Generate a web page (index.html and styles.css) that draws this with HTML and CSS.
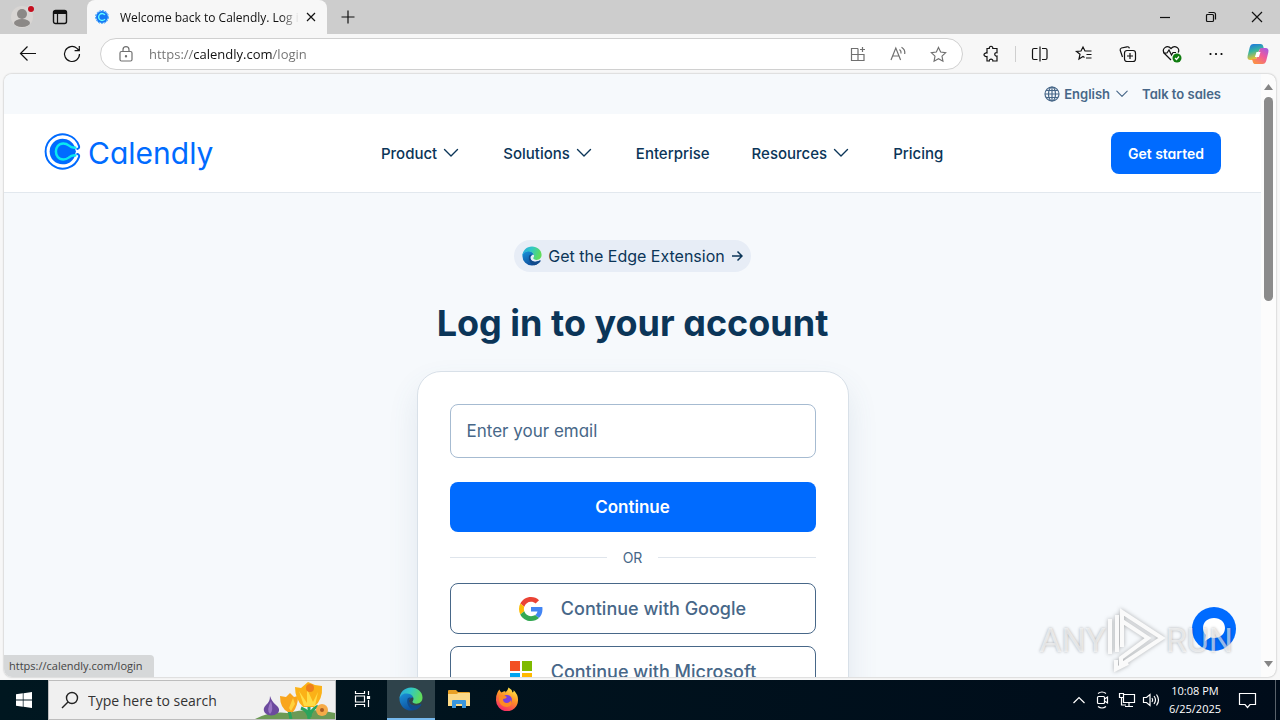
FILE: index.html
```html
<!DOCTYPE html>
<html lang="en">
<head>
  <meta charset="utf-8">
  <title>Welcome back to Calendly. Log in</title>
  <meta name="viewport" content="width=device-width, initial-scale=1">
  <link rel="stylesheet" href="styles.css">
</head>
<body>
  <!-- shared icons -->
  <svg class="defs" width="0" height="0" aria-hidden="true">
    <defs>
      <linearGradient id="edge-top" x1="0" y1="0" x2="1" y2="0.3">
        <stop offset="0" stop-color="#2aa5e0" />
        <stop offset="0.5" stop-color="#31c8c4" />
        <stop offset="1" stop-color="#5fdc5c" />
      </linearGradient>
      <linearGradient id="edge-low" x1="0" y1="0" x2="0.6" y2="1">
        <stop offset="0" stop-color="#1b94dc" />
        <stop offset="1" stop-color="#0c4a97" />
      </linearGradient>
      <linearGradient id="fox" x1="0.8" y1="0" x2="0.3" y2="1">
        <stop offset="0" stop-color="#fff04a" />
        <stop offset="0.45" stop-color="#ff9326" />
        <stop offset="1" stop-color="#f5246a" />
      </linearGradient>
      <linearGradient id="pilot-a" x1="0" y1="0" x2="0.3" y2="1">
        <stop offset="0" stop-color="#1a6fe8" />
        <stop offset="0.5" stop-color="#37b5a0" />
        <stop offset="1" stop-color="#f6c32c" />
      </linearGradient>
      <linearGradient id="pilot-b" x1="1" y1="0" x2="0.3" y2="1">
        <stop offset="0" stop-color="#9a5bea" />
        <stop offset="0.5" stop-color="#ef5a9b" />
        <stop offset="1" stop-color="#fb8f48" />
      </linearGradient>
      <symbol id="chevron" viewBox="0 0 20 20">
        <path d="M3.500 6.500l6.500 6.500 6.500-6.500" fill="none" stroke="currentColor" stroke-width="1.400" stroke-linecap="round" stroke-linejoin="round" />
      </symbol>
      <symbol id="edge" viewBox="0 0 24 24">
        <path d="M.5 12C.5 7 5 6 8 6c4 0 6 2.500 6.500 4.500-2-.5-4.500.8-4.500 3.500 0 4 6 6.500 11.500 3.500.7-.4 1 0 .6.700C19.500 21.500 15.500 23.500 12 23.500A11.500 11.500 0 0 1 .5 12z" fill="url(#edge-low)" />
        <path d="M8.500 12c-1.200 4.500 1.500 10 6.500 11.200 3-.8 5.500-2.500 7.100-5 .4-.7.100-1.100-.6-.7C16 20.500 10 18 10 14c0-1.700.8-2.800 2-3.300-1.500-.5-3 0-3.500 1.300z" fill="#114a8b" />
        <path d="M.5 12C.5 5.500 5.500.5 12 .5c6.500 0 11.500 4.500 11.500 10 0 4-2.700 6.200-6 6.200-2.500 0-4-.9-4-1.900 0-.7 1-1.300 1-3 0-2.500-2.500-5.300-6.500-5.300C4 6.500 1 8.500.5 12z" fill="url(#edge-top)" />
      </symbol>
      <symbol id="calendly" viewBox="0 0 36 36">
        <path d="M32.300 15.500c1.800-.3 2.200-1.500 1.700-3A16.700 16.700 0 1 0 34 23.500c.5-1.500.1-2.700-1.700-3" fill="none" stroke="#006bff" stroke-width="1.900" stroke-linecap="round" />
        <path d="M18 5.500c5.500 0 9.500 2.800 11.800 7.500L31 18l-1.200 5c-2.300 4.700-6.300 7.500-11.800 7.500a12.500 12.500 0 0 1 0-25z" fill="#006bff" />
        <path d="M31.500 14c-4 1-5.800-.5-7.500-2-1.600-1.300-3-1.800-5.200-1.800-9.600 0-9.600 15.600 0 15.600 2.200 0 3.600-.5 5.200-1.800 1.700-1.500 3.500-3 7.500-2" fill="none" stroke="#0ae8f0" stroke-width="2.400" />
      </symbol>
    </defs>
  </svg>

  <header class="tabstrip">
    <button class="strip-btn" aria-label="Profile">
      <svg width="24" height="24" viewBox="0 0 24 24"><circle cx="12" cy="12" r="11" fill="#d8d5d3" /><circle cx="12" cy="9" r="5" fill="#8b8886" /><ellipse cx="12" cy="18" rx="8" ry="4" fill="#8b8886" /><circle cx="21" cy="4" r="4" fill="#d8d8d8" /><circle cx="21" cy="4" r="3" fill="#c50f1f" /></svg>
    </button>
    <button class="strip-btn" aria-label="Tab actions">
      <svg class="line" width="16" height="16" viewBox="0 0 16 16"><rect x="1.500" y="1.500" width="13" height="13" rx="2" stroke-width="1.400" /><path d="M1.500 3.500h13" stroke-width="3" /><path d="M5.500 4v10.500" /></svg>
    </button>
    <div class="tab">
      <svg width="16" height="16" viewBox="0 0 16 16"><circle cx="8" cy="8" r="6" fill="#1478f5" /><circle cx="8" cy="8" r="6.500" fill="none" stroke="#45a7fb" stroke-dasharray="2 1" /><path d="M11 6a3.500 3.500 0 1 0 0 4" fill="none" stroke="#6ff" stroke-width="1.300" /></svg>
      <span class="tab-title">Welcome back to Calendly. Log in</span>
      <button class="tab-close" aria-label="Close tab"><svg class="line" width="10" height="10" viewBox="0 0 10 10"><path d="M1 1l8 8M9 1l-8 8" /></svg></button>
    </div>
    <button class="new-tab" aria-label="New tab"><svg class="line" width="14" height="14" viewBox="0 0 14 14"><path d="M7 .5v13M.5 7h13" /></svg></button>
    <div class="window-controls">
      <button aria-label="Minimize"><svg class="line" width="10" height="10" viewBox="0 0 10 10"><path d="M0 5.500h10" /></svg></button>
      <button aria-label="Restore"><svg class="line" width="10" height="10" viewBox="0 0 10 10"><rect x=".5" y="2.500" width="7" height="7" rx="1" /><path d="M2.500.5h5a2 2 0 0 1 2 2v5" /></svg></button>
      <button aria-label="Close"><svg class="line" width="10" height="10" viewBox="0 0 10 10"><path d="M0 0l10 10M10 0L0 10" /></svg></button>
    </div>
  </header>

  <div class="toolbar">
    <button aria-label="Back"><svg class="line" width="18" height="18" viewBox="0 0 18 18"><path d="M17 8.500H1.500M8.500 1.500l-7 7 7 7" /></svg></button>
    <button aria-label="Refresh"><svg class="line" width="18" height="18" viewBox="0 0 18 18"><path d="M16.500 9A7.500 7.500 0 1 1 14 3.400L16 5.500M16.300 1v4.700h-4.700" /></svg></button>
    <div class="address">
      <svg class="line" width="14" height="16" viewBox="0 0 14 16"><rect x="1" y="5.500" width="12" height="9.500" rx="1.500" /><path d="M4 5.500V3.700a3 3 0 0 1 6 0v1.800" /><circle cx="7" cy="10.300" r=".6" fill="currentColor" /></svg>
      <input class="url" type="text" aria-label="Address" value="https://calendly.com/login">
      <button aria-label="Apps"><svg class="line" width="16" height="16" viewBox="0 0 16 16"><path d="M8 2.500H1.500v12H14V8.500H1.500M8 2.500v12M12.500 1v5M10 3.500h5" /></svg></button>
      <button aria-label="Read aloud"><svg class="line" width="16" height="16" viewBox="0 0 16 16"><path d="M1 14L5.800 2l4.800 12M2.500 10h6.500M9.500 3.500q2 1.500 1.500 4M11.500 1.200q4 2.300 3.200 6.800" /></svg></button>
      <button aria-label="Favorite"><svg class="line" width="17" height="17" viewBox="0 0 18 18"><path d="M9 1.500l2.300 4.900 5.300.7-3.900 3.700 1 5.300L9 13.500l-4.700 2.600 1-5.300L1.400 7.100l5.300-.7z" /></svg></button>
    </div>
    <button aria-label="Extensions"><svg class="line" width="16" height="18" viewBox="0 0 16 18"><path d="M4 3.500h2.300c-.5-3 4-3 3.500 0H14v4.200c-3-.5-3 3.800 0 3.300V16H9.800c.5-2.500-4-2.500-3.500 0H4v-4.500c-4 .5-4-4 0-3.500z" /></svg></button>
    <span class="divider"></span>
    <button aria-label="Split screen"><svg class="line" width="16" height="16" viewBox="0 0 16 16"><path d="M5.500 2.500H2a1.500 1.500 0 0 0-1.500 1.500v8A1.500 1.500 0 0 0 2 13.500h3.500M10 2.500h3.500A1.500 1.500 0 0 1 15 4v8a1.500 1.500 0 0 1-1.500 1.500H10M8 .5v15" /></svg></button>
    <button aria-label="Favorites"><svg class="line" width="18" height="16" viewBox="0 0 18 16"><path d="M9.500 11.500l-1.500-1-4 2.500 1-4.800L1.500 5.500 6 5l2-4 2 4h6.500M11.500 8.500h5M11 12h5.500" /></svg></button>
    <button aria-label="Collections"><svg class="line" width="18" height="17" viewBox="0 0 18 17"><path d="M3.500 11L1.200 4.300A2 2 0 0 1 2.500 2L8 .8a2 2 0 0 1 2.400 1.600" /><rect x="5.500" y="4.500" width="11" height="11" rx="2.500" /><path d="M11 7v6M8 10h6" /></svg></button>
    <button aria-label="Browser essentials"><svg class="line" width="20" height="18" viewBox="0 0 20 18"><path d="M9 15L2.500 8.500C-1 4 5-1 9 3.500c4-4.500 10 .5 7 4M1 8h4l2-3 2.500 5L11 7.500h3" /><circle cx="15" cy="13" r="4.500" fill="#107c10" stroke="none" /><path d="M13 13l1.500 1.500 2.500-3" stroke="#fff" /></svg></button>
    <button aria-label="Menu"><svg width="14" height="4" viewBox="0 0 14 4"><circle cx="1.500" cy="2" r="1.100" /><circle cx="7" cy="2" r="1.100" /><circle cx="12.500" cy="2" r="1.100" /></svg></button>
    <button class="copilot" aria-label="Copilot"><svg width="22" height="22" viewBox="0 0 22 22"><path d="M6.500 1h7c1.500 0 2.300.9 2.700 2.300L17 6h-2.500c-1.500 0-2.300.6-2.800 2.300L9.500 15c-.4 1.400-1 2-2.500 2H3.500C1 17 0 15.500.7 12.500l2-8C3.300 2 4.500 1 6.500 1z" fill="url(#pilot-a)" /><path d="M15.500 21h-7c-1.500 0-2.300-.9-2.700-2.300L5 16h2.500c1.500 0 2.300-.6 2.800-2.300L12.500 7c.4-1.400 1-2 2.500-2h3.500c2.500 0 3.500 1.500 2.800 4.500l-2 8c-.6 2.500-1.800 3.500-3.800 3.500z" fill="url(#pilot-b)" /><path d="M9.500 9h4l-1.600 5h-4z" fill="#fff" /></svg></button>
  </div>

  <div class="viewport">
    <div class="site">
      <div class="utility">
        <button class="language">
          <svg class="line" width="16" height="16" viewBox="0 0 16 16"><circle cx="8" cy="8" r="7" /><ellipse cx="8" cy="8" rx="3.500" ry="7" /><path d="M8 1v14M1 8h14M2 4.500h12M2 11.500h12" /></svg>
          English
          <svg width="16" height="16"><use href="#chevron" /></svg>
        </button>
        <a href="#">Talk to sales</a>
      </div>

      <div class="site-header">
        <a class="logo" href="#" aria-label="Calendly">
          <svg width="37" height="37"><use href="#calendly" /></svg>
          <span>Calendly</span>
        </a>
        <nav class="nav">
          <button>Product <svg width="20" height="20"><use href="#chevron" /></svg></button>
          <button>Solutions <svg width="20" height="20"><use href="#chevron" /></svg></button>
          <a href="#">Enterprise</a>
          <button>Resources <svg width="20" height="20"><use href="#chevron" /></svg></button>
          <a href="#">Pricing</a>
        </nav>
        <button class="get-started">Get started</button>
      </div>

      <main class="login">
        <a class="extension" href="#">
          <svg width="20" height="20"><use href="#edge" /></svg>
          Get the Edge Extension
          <svg class="arrow" width="12" height="12" viewBox="0 0 12 12"><path d="M1 6h10M6.500 1.500L11 6l-4.500 4.500" /></svg>
        </a>
        <h1>Log in to your account</h1>
        <form class="card">
          <input class="email" type="email" placeholder="Enter your email" aria-label="Email">
          <button class="primary" type="button">Continue</button>
          <div class="or">OR</div>
          <button class="social" type="button">
            <svg width="24" height="24" viewBox="0 0 48 48"><path fill="#ea4335" d="M24 9.500c3.540 0 6.710 1.220 9.210 3.600l6.850-6.850C35.900 2.380 30.470 0 24 0 14.620 0 6.510 5.380 2.560 13.220l7.980 6.190C12.430 13.720 17.740 9.500 24 9.500z" /><path fill="#4285f4" d="M46.980 24.550c0-1.570-.15-3.090-.38-4.550H24v9.020h12.940c-.58 2.960-2.260 5.480-4.780 7.180l7.730 6c4.510-4.180 7.090-10.360 7.090-17.650z" /><path fill="#fbbc05" d="M10.530 28.590A14.500 14.500 0 0 1 9.770 24c0-1.600.27-3.140.76-4.590l-7.980-6.190A23.900 23.900 0 0 0 0 24c0 3.880.92 7.540 2.560 10.780z" /><path fill="#34a853" d="M24 48c6.480 0 11.930-2.130 15.890-5.810l-7.730-6C30.010 37.640 27.240 38.490 24 38.490c-6.260 0-11.570-4.220-13.470-9.910l-7.980 6.190C6.510 42.620 14.620 48 24 48z" /></svg>
            Continue with Google
          </button>
          <button class="social" type="button">
            <svg width="24" height="24" viewBox="0 0 24 24"><path fill="#f25022" d="M1 1h10v10H1z" /><path fill="#7fba00" d="M13 1h10v10H13z" /><path fill="#00a4ef" d="M1 13h10v10H1z" /><path fill="#ffb900" d="M13 13h10v10H13z" /></svg>
            Continue with Microsoft
          </button>
        </form>
      </main>
    </div>

    <div class="scrollbar">
      <svg width="9" height="6" viewBox="0 0 9 6"><path d="M0 6l4.500-6L9 6z" /></svg>
      <div class="thumb"></div>
      <svg class="down" width="9" height="6" viewBox="0 0 9 6"><path d="M0 0h9L4.500 6z" /></svg>
    </div>

    <button class="chat" aria-label="Chat">
      <svg width="26" height="26" viewBox="0 0 26 26"><path d="M13 2c6.500 0 11 4.300 11 10s-4.500 10-11 10c-1.300 0-2.500-.2-3.500-.5L4 25l1-6c-2-1.800-3-4.200-3-7C2 6.300 6.500 2 13 2z" fill="#fff" /></svg>
    </button>
    <div class="watermark">
      <span>ANY</span>
      <svg width="60" height="66" viewBox="0 0 60 66"><path d="M4 47V12M11 45V8M16 40V5l40 26-41 27v-7l27-20-26-17M10 53v9l12-6" /></svg>
      <span>RUN</span>
    </div>
    <div class="status">https://calendly.com/login</div>
  </div>

  <footer class="taskbar">
    <button class="start" aria-label="Start"><svg width="16" height="16" viewBox="0 0 16 16"><path fill="#fff" d="M0 2.300l6.800-1v6.300H0zM7.500 1.200L16 0v7.600H7.500zM0 8.400h6.800v6.300L0 13.700zM7.500 8.400H16V16l-8.500-1.200z" /></svg></button>
    <div class="search">
      <svg class="line" width="18" height="18" viewBox="0 0 18 18"><circle cx="11" cy="7" r="5.500" stroke-width="1.400" /><path d="M7 11l-6 6" stroke-width="1.400" /></svg>
      <input type="text" placeholder="Type here to search" aria-label="Search">
      <svg width="80" height="38" viewBox="0 0 80 38">
        <path d="M0 38q16-8 32-6 24-6 48 0v6z" fill="#6c9a55" />
        <path d="M33 25l3 13M54 22v16M46 27q8 3 8 11M63 25q-8 4-8 11" stroke="#2ba45c" stroke-width="3" fill="none" />
        <path d="M15 15q2 6 6 9 5 4 2 8-7 5-13 0-3-4 1-8 4-3 4-9z" fill="#6c4a9e" /><path d="M16 20q3 9-1 13-4-4 1-13z" fill="#9a76c4" />
        <path d="M25 15l6 1 4-4 4 4 4-1q0 10-5 16h-5q-8-4-8-16z" fill="#f9a51d" /><path d="M28 18l6 9 4-10 2 6-4 7z" fill="#ffd13b" />
        <path d="M40 6l6 1 7-6 7 3 7 1q1 14-8 21H48Q40 18 40 6z" fill="#fbb117" /><path d="M44 10l8 12V8l6 13 5-10-3 14H49z" fill="#ffdc45" /><circle cx="55" cy="7" r="4" fill="#ee7f1c" />
        <circle cx="67" cy="29" r="6" fill="#f6ab48" /><circle cx="67" cy="29" r="2" fill="#a95c22" />
      </svg>
    </div>
    <button class="task" aria-label="Task view"><svg class="line" width="18" height="18" viewBox="0 0 18 18"><path d="M2.500 1v2.500h9V1M2.500 17v-2.500h9V17M2.500 6h9v6h-9zM15.500 1v4M15.500 10v7" /><path d="M14.500 6.500h2v2h-2z" fill="#fff" /></svg></button>
    <button class="task active" aria-label="Edge"><svg width="24" height="24"><use href="#edge" /></svg></button>
    <button class="task" aria-label="File Explorer"><svg width="22" height="20" viewBox="0 0 22 20"><path d="M0 2q0-1 1-1h7l2 2h11q1 0 1 1v5H0z" fill="#e8a025" /><path d="M0 5h9l1-1h12v13H0z" fill="#fcd987" /><path d="M4 19v-7q0-1 1-1h12q1 0 1 1v7h-4v-4H8v4z" fill="#3a96dd" /></svg></button>
    <button class="task" aria-label="Firefox"><svg width="24" height="24" viewBox="0 0 24 24"><path d="M2.500 5.500Q3 4 4.500 2.500q.5 2 2 3 2-1.500 4-1.500-.5 1 0 1.500Q13 3 13.500.5q3 1.500 4 5Q19 5 18.500 3q5 5 4.500 10.500A11 11 0 0 1 1 13Q1 8 2.500 5.500z" fill="url(#fox)" /><circle cx="12" cy="13" r="5" fill="#7a3fe0" /><path d="M4 9q4-2 8 1-1 2-4 2 0 4 4 4 4-1 4-4 2 7-4 8-7 0-8-7z" fill="#ff8a22" /></svg></button>
    <div class="tray">
      <button aria-label="Hidden icons"><svg class="line" width="12" height="8" viewBox="0 0 12 8"><path d="M.5 7L6 1.500 11.500 7" /></svg></button>
      <button aria-label="Meet now"><svg class="line" width="16" height="18" viewBox="0 0 16 18"><rect x="2.500" y="5.500" width="7" height="7" rx="1" /><path d="M9.500 8l3-2v6l-3-2M3 2.500q4-3 8 0M3 15.500q4 3 8 0" /></svg></button>
      <button aria-label="Network"><svg class="line" width="16" height="16" viewBox="0 0 16 16"><path d="M5 2.500h10.500v8H4.500V6M6 14.500h8M10 10.500v4M.5 1.500h4v4h-4zM2.500 6v7H7" /></svg></button>
      <button aria-label="Volume"><svg class="line" width="17" height="16" viewBox="0 0 17 16"><path d="M.5 5.500h3L7 2.500v11l-3.500-3h-3zM9 6q1.500 2 0 4M11 4q3 4 0 8M13.500 2.500q4 5.500 0 11" /></svg></button>
      <div class="clock"><span>10:08 PM</span><span>6/25/2025</span></div>
      <button class="notify" aria-label="Notifications"><svg class="line" width="17" height="17" viewBox="0 0 17 17"><path d="M.5 1.500h16v11H11L8.500 15.500 6 12.500H.5z" /></svg></button>
    </div>
    <div class="show-desktop"></div>
  </footer>
</body>
</html>
```
FILE: styles.css
```css
* {
  box-sizing: border-box;
}
body {
  margin: 0;
  height: 100vh;
  display: flex;
  flex-direction: column;
  overflow: hidden;
  background: #f7f7f7;
  color: #111;
  font-family: "Open Sans", "Noto Sans", sans-serif;
  font-size: 12px;
}
button,
input {
  font: inherit;
  color: inherit;
  border: 0;
  padding: 0;
  background: none;
}
button {
  display: flex;
  align-items: center;
  justify-content: center;
}
a {
  color: inherit;
  text-decoration: none;
}
svg {
  display: block;
  flex: none;
}
.defs {
  position: absolute;
}
.line {
  fill: none;
  stroke: currentColor;
  stroke-width: 1.2;
  overflow: visible;
}

/* browser tabs */
.tabstrip {
  display: flex;
  flex: none;
  height: 34px;
  padding-left: 3px;
  background: #cdcdcd;
}
.strip-btn {
  width: 38px;
}
.tab {
  display: flex;
  align-items: center;
  width: 240px;
  margin-left: 8px;
  padding: 0 8px 0 7px;
  border-radius: 8px 8px 0 0;
  background: #f7f7f7;
}
.tab-title {
  flex: 1;
  margin-left: 10px;
  overflow: hidden;
  white-space: nowrap;
  -webkit-mask-image: linear-gradient(to right, #000 90%, transparent);
  mask-image: linear-gradient(to right, #000 90%, transparent);
}
.tab-close {
  width: 16px;
  height: 16px;
  margin-left: 4px;
}
.new-tab {
  width: 42px;
}
.window-controls {
  display: flex;
  margin-left: auto;
}
.window-controls button {
  width: 46px;
}

/* address bar */
.toolbar {
  display: flex;
  flex: none;
  align-items: center;
  height: 40px;
  padding-left: 6px;
}
.toolbar > button {
  width: 44px;
  height: 32px;
}
.toolbar > .copilot {
  width: 40px;
  margin-right: 2px;
}
.address {
  display: flex;
  flex: 1;
  align-items: center;
  height: 32px;
  margin: 0 6px;
  padding: 0 4px 0 18px;
  border: 1px solid #d0d0d0;
  border-radius: 16px;
  background: #fff;
  color: #707070;
}
.address button {
  width: 40px;
  height: 28px;
}
.url {
  flex: 1;
  margin-left: 16px;
  font-size: 13px;
  color: transparent;
  background: linear-gradient(to right, #707070 44px, #111 44px, #111 124px, #707070 124px);
  -webkit-background-clip: text;
  background-clip: text;
  outline: 0;
}
.divider {
  width: 1px;
  height: 16px;
  margin: 0 2px;
  background: #cfcfcf;
}

/* page frame */
.viewport {
  position: relative;
  display: flex;
  flex: 1;
  min-height: 0;
  margin: 0 4px 3px;
  border-radius: 8px;
  background: #fcfcfc;
  box-shadow: 0 0 2px rgba(0, 0, 0, 0.35);
  overflow: hidden;
}
.site {
  flex: 1;
  overflow: hidden;
  background: #f6f9fc;
  color: #0b3558;
  font-family: Inter, sans-serif;
  font-feature-settings: "cv11";
}
.scrollbar {
  display: flex;
  flex-direction: column;
  align-items: center;
  width: 15px;
  padding: 10px 0;
  fill: #858585;
}
.thumb {
  width: 9px;
  height: 35%;
  margin-top: 7px;
  border-radius: 5px;
  background: #8b8b8b;
}
.down {
  margin-top: auto;
}

/* site header */
.utility {
  display: flex;
  align-items: center;
  justify-content: flex-end;
  gap: 12px;
  height: 40px;
  padding: 0 40px;
  color: #476788;
  font-size: 13px;
  font-weight: 600;
}
.language {
  gap: 4px;
}
.site-header {
  display: flex;
  align-items: center;
  justify-content: space-between;
  height: 79px;
  padding: 0 40px;
  border-bottom: 1px solid #e2e8ee;
  background: #fff;
}
.logo {
  display: flex;
  gap: 7px;
  color: #006bff;
  font-size: 30px;
  line-height: 40px;
}
.nav {
  display: flex;
  align-items: center;
  gap: 42px;
  font-size: 15px;
  font-weight: 500;
}
.nav button {
  gap: 4px;
}
.get-started {
  height: 42px;
  padding: 0 17px;
  border-radius: 8px;
  background: #006bff;
  color: #fff;
  font-size: 14px;
  font-weight: 600;
}

/* login */
.login {
  display: flex;
  flex-direction: column;
  align-items: center;
  padding-top: 47px;
}
.extension {
  display: flex;
  align-items: center;
  gap: 6px;
  height: 32px;
  padding: 0 8px;
  border-radius: 16px;
  background: #e7edf6;
  font-size: 16px;
}
.arrow {
  fill: none;
  stroke: currentColor;
  stroke-width: 1.5;
}
h1 {
  margin: 27px 0 24px;
  font-size: 36px;
  font-weight: 700;
  line-height: 48px;
}
.card {
  width: 432px;
  max-width: 100%;
  padding: 32px;
  border: 1px solid #d8e0e8;
  border-radius: 24px;
  background: #fff;
  box-shadow: 0 15px 30px rgba(71, 103, 136, 0.12);
  color: #476788;
  font-size: 17px;
}
.email {
  display: block;
  width: 100%;
  height: 54px;
  padding: 0 16px;
  border: 1px solid #a6bbd1;
  border-radius: 8px;
}
.email::placeholder {
  color: #476788;
}
.primary {
  width: 100%;
  height: 50px;
  margin-top: 24px;
  border-radius: 8px;
  background: #006bff;
  color: #fff;
  font-weight: 600;
}
.or {
  display: flex;
  align-items: center;
  gap: 16px;
  height: 51px;
  font-size: 14px;
}
.or::before,
.or::after {
  content: "";
  flex: 1;
  height: 1px;
  background: #dfe5ec;
}
.social {
  gap: 18px;
  width: 100%;
  height: 51px;
  margin-bottom: 12px;
  border: 1px solid #476788;
  border-radius: 8px;
  font-size: 18px;
  font-weight: 500;
}

/* things floating over the page */
.chat {
  position: absolute;
  right: 40px;
  bottom: 26px;
  width: 44px;
  height: 44px;
  border-radius: 50%;
  background: #006bff;
}
.watermark {
  position: absolute;
  right: 43px;
  bottom: 4px;
  display: flex;
  align-items: center;
  color: rgba(255, 255, 255, 0.6);
  font-family: Roboto, sans-serif;
  font-size: 34px;
  text-shadow: 0 0 3px rgba(0, 0, 0, 0.3);
  pointer-events: none;
}
.watermark svg {
  fill: none;
  stroke: #fafafa;
  stroke-width: 4;
  filter: drop-shadow(0 0 2px rgba(0, 0, 0, 0.3));
}
.status {
  position: absolute;
  left: 0;
  bottom: 0;
  padding: 0 11px 0 5px;
  border-radius: 0 4px 0 0;
  background: #d6d8d9;
  color: #444;
  font-size: 11px;
  line-height: 22px;
}

/* taskbar */
.taskbar {
  display: flex;
  flex: none;
  height: 40px;
  background: linear-gradient(to right, #001720, #000c1a);
  color: #fff;
}
.start,
.task {
  width: 48px;
}
.search {
  display: flex;
  align-items: center;
  width: 288px;
  padding-left: 12px;
  border: 1px solid #bdbdbd;
  background: #f0f0f0;
  color: #222;
}
.search input {
  flex: 1;
  min-width: 0;
  margin-left: 9px;
  font-size: 14px;
  outline: 0;
}
.search input::placeholder {
  color: #333;
}
.task {
  border-bottom: 2px solid transparent;
}
.search + .task {
  width: 51px;
}
.active {
  border-bottom-color: #76b9ed;
  background: #2f434b;
}
.tray {
  display: flex;
  align-items: center;
  margin-left: auto;
}
.tray button {
  width: 24px;
  height: 40px;
}
.clock {
  display: flex;
  flex-direction: column;
  width: 64px;
  text-align: center;
  font-size: 11px;
  line-height: 18px;
}
.tray .notify {
  width: 40px;
}
.show-desktop {
  width: 5px;
  margin-left: 8px;
  border-left: 1px solid #59626b;
}
```
